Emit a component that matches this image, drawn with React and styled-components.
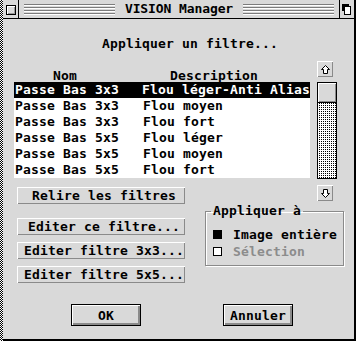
import React from 'react';
import styled, { createGlobalStyle } from 'styled-components';

const GlobalStyle = createGlobalStyle`
  html, body { margin: 0; padding: 0; background: #fff; }
  body {
    font-family: "DejaVu Sans Mono", "Liberation Mono", monospace;
    font-weight: bold;
    font-size: 13px;
    letter-spacing: 0.17px;
    color: #000;
  }
`;

const GRAY = '#d9d9d9';

const filtres = [
  { nom: 'Passe Bas 3x3', desc: 'Flou léger-Anti Alias' },
  { nom: 'Passe Bas 3x3', desc: 'Flou moyen' },
  { nom: 'Passe Bas 3x3', desc: 'Flou fort' },
  { nom: 'Passe Bas 5x5', desc: 'Flou léger' },
  { nom: 'Passe Bas 5x5', desc: 'Flou moyen' },
  { nom: 'Passe Bas 5x5', desc: 'Flou fort' },
];

const Desktop = styled.div`
  width: 356px;
  height: 341px;
  display: flex;
  background: repeating-conic-gradient(#000 0 25%, #fff 0 50%) 0 0 / 2px 2px;
`;

const Window = styled.div`
  margin-left: 3px;
  width: 351px;
  height: 339px;
  border-right: 2px solid #000;
  border-bottom: 2px solid #000;
  background: ${GRAY};
  display: flex;
  flex-direction: column;
`;

const TitleBar = styled.div`
  height: 18px;
  border-bottom: 1px solid #000;
  display: flex;
`;

const CloseCell = styled.div`
  width: 16px;
  border-right: 1px solid #000;
  padding: 5px 0 0 3px;
  box-sizing: border-box;
`;

const CloseBox = styled.div`
  width: 10px;
  height: 10px;
  box-sizing: border-box;
  border: 1px solid #000;
  box-shadow: inset 1px 1px 0 #fff, inset -1px -1px 0 #999;
`;

const Stripes = styled.div`
  flex: 1;
  margin: 3px 5px;
  display: flex;
  justify-content: center;
  background: repeating-linear-gradient(to bottom, transparent 0 1px, #7c7c7c 1px 2px, #fff 2px 3px);
`;

const Title = styled.div`
  background: ${GRAY};
  padding: 0 10px;
  line-height: 12px;
  letter-spacing: -0.1px;
`;

const ZoomCell = styled.div`
  width: 15px;
  border-left: 1px solid #000;
  display: flex;
  justify-content: center;
  padding-top: 4px;
  box-sizing: border-box;
`;

const Body = styled.div`
  display: flex;
  flex-direction: column;
  padding-left: 11px;
`;

const Heading = styled.div`
  margin-top: 17px;
  padding-left: 88px;
  line-height: 16px;
`;

const MiddleRow = styled.div`
  margin-top: 9px;
  display: flex;
  align-items: flex-start;
`;

const LeftArea = styled.div`
  width: 296px;
  display: flex;
  flex-direction: column;
`;

const ListHeader = styled.div`
  height: 21px;
  box-sizing: border-box;
  padding-top: 9px;
  line-height: 12px;
  display: flex;
`;

const HeadLabel = styled.span`
  margin-left: ${p => p.$offset}px;
`;

const List = styled.div`
  background: #fff;
  height: 96px;
`;

const Row = styled.div`
  height: 16px;
  line-height: 16px;
  display: flex;
  white-space: pre;
  background: ${p => (p.$selected ? '#000' : 'transparent')};
  color: ${p => (p.$selected ? '#fff' : '#000')};
`;

const NameCell = styled.span`
  width: 129px;
  padding-left: 1px;
  box-sizing: border-box;
`;

const BevelButton = styled.button`
  font: inherit;
  letter-spacing: inherit;
  color: #000;
  background: ${GRAY};
  width: 168px;
  height: 17px;
  padding: 0 0 0 6px;
  margin: 0;
  border: none;
  box-shadow: inset 1px 1px 0 #fff, inset -1px -1px 0 #8a8a8a;
  line-height: 17px;
  text-align: center;
  white-space: pre;
`;

const RelireButton = styled(BevelButton)`
  margin: 9px 0 0 3px;
`;

const ScrollCol = styled.div`
  margin-left: 7px;
  width: 20px;
  display: flex;
  flex-direction: column;
`;

const ArrowButton = styled.div`
  width: 16px;
  height: 16px;
  margin-top: ${p => p.$top || 0}px;
  box-shadow: inset 1px 1px 0 #fff, inset -1px -1px 0 #8a8a8a;
  display: flex;
  align-items: center;
  justify-content: center;
`;

const Track = styled.div`
  margin-top: 5px;
  height: 97px;
  box-sizing: border-box;
  border: 1px solid #000;
  background: conic-gradient(#000 0 25%, #fff 0 100%) 0 0 / 2px 2px;
`;

const Thumb = styled.div`
  height: 19px;
  background: ${GRAY};
  border-bottom: 1px solid #000;
  box-shadow: inset 1px 1px 0 #fff, inset -1px -1px 0 #8a8a8a;
`;

const BottomRow = styled.div`
  display: flex;
  align-items: flex-start;
`;

const EditCol = styled.div`
  margin: 14px 0 0 3px;
  display: flex;
  flex-direction: column;
  gap: 7px;
`;

const Group = styled.fieldset`
  margin: -1px 0 0 20px;
  width: 139px;
  box-sizing: border-box;
  padding: 7px 0 5px 7px;
  border: 1px solid #8a8a8a;
  box-shadow: inset 1px 1px 0 #fff, 1px 1px 0 #fff;
`;

const Legend = styled.legend`
  padding: 0 2px;
  margin-left: -2px;
  line-height: 16px;
`;

const Option = styled.div`
  display: flex;
  align-items: center;
  gap: 11px;
  height: 17px;
  color: ${p => (p.$disabled ? '#8c8c8c' : '#000')};
`;

const Marker = styled.span`
  width: 9px;
  height: 9px;
  box-sizing: border-box;
  border: 1px solid #000;
  background: ${p => (p.$filled ? '#000' : '#fff')};
`;

const Footer = styled.div`
  margin-top: 21px;
  padding-left: 57px;
  display: flex;
  gap: 82px;
`;

const DialogButton = styled.button`
  font: inherit;
  letter-spacing: inherit;
  color: #000;
  background: ${GRAY};
  width: 70px;
  height: 22px;
  margin: 0;
  padding: 0;
  border: 1px solid #000;
  box-shadow: inset 1px 1px 0 #fff, inset -2px -2px 0 #8a8a8a;
  text-align: center;
`;

function Arrow({ down }) {
  return (
    <svg width="9" height="9" viewBox="0 0 9 9" style={down ? { transform: 'rotate(180deg)' } : undefined}>
      <path d="M4.5 0.5 L8.5 4.5 L6.5 4.5 L6.5 8.5 L2.5 8.5 L2.5 4.5 L0.5 4.5 Z" fill="#fff" stroke="#000" strokeWidth="1" />
    </svg>
  );
}

function ZoomIcon() {
  return (
    <svg width="10" height="11" viewBox="0 0 10 11" shapeRendering="crispEdges">
      <rect x="0" y="0" width="7" height="7" fill="#000" />
      <rect x="2.5" y="2.5" width="6" height="8" fill="#fff" stroke="#000" strokeWidth="1" />
    </svg>
  );
}

export default function App() {
  return (
    <>
      <GlobalStyle />
      <Desktop>
        <Window>
          <TitleBar>
            <CloseCell><CloseBox /></CloseCell>
            <Stripes><Title>VISION Manager</Title></Stripes>
            <ZoomCell><ZoomIcon /></ZoomCell>
          </TitleBar>
          <Body>
            <Heading>Appliquer un filtre...</Heading>
            <MiddleRow>
              <LeftArea>
                <ListHeader>
                  <HeadLabel $offset={39}>Nom</HeadLabel>
                  <HeadLabel $offset={93}>Description</HeadLabel>
                </ListHeader>
                <List>
                  {filtres.map((f, i) => (
                    <Row key={i} $selected={i === 0}>
                      <NameCell>{f.nom}</NameCell>
                      <span>{f.desc}</span>
                    </Row>
                  ))}
                </List>
                <RelireButton>Relire les filtres</RelireButton>
              </LeftArea>
              <ScrollCol>
                <ArrowButton><Arrow /></ArrowButton>
                <Track><Thumb /></Track>
                <ArrowButton $top={6}><Arrow down /></ArrowButton>
              </ScrollCol>
            </MiddleRow>
            <BottomRow>
              <EditCol>
                <BevelButton>Editer ce filtre...</BevelButton>
                <BevelButton>Editer filtre 3x3...</BevelButton>
                <BevelButton>Editer filtre 5x5...</BevelButton>
              </EditCol>
              <Group>
                <Legend>Appliquer à</Legend>
                <Option><Marker $filled />Image entière</Option>
                <Option $disabled><Marker />Sélection</Option>
              </Group>
            </BottomRow>
            <Footer>
              <DialogButton>OK</DialogButton>
              <DialogButton>Annuler</DialogButton>
            </Footer>
          </Body>
        </Window>
      </Desktop>
    </>
  );
}
